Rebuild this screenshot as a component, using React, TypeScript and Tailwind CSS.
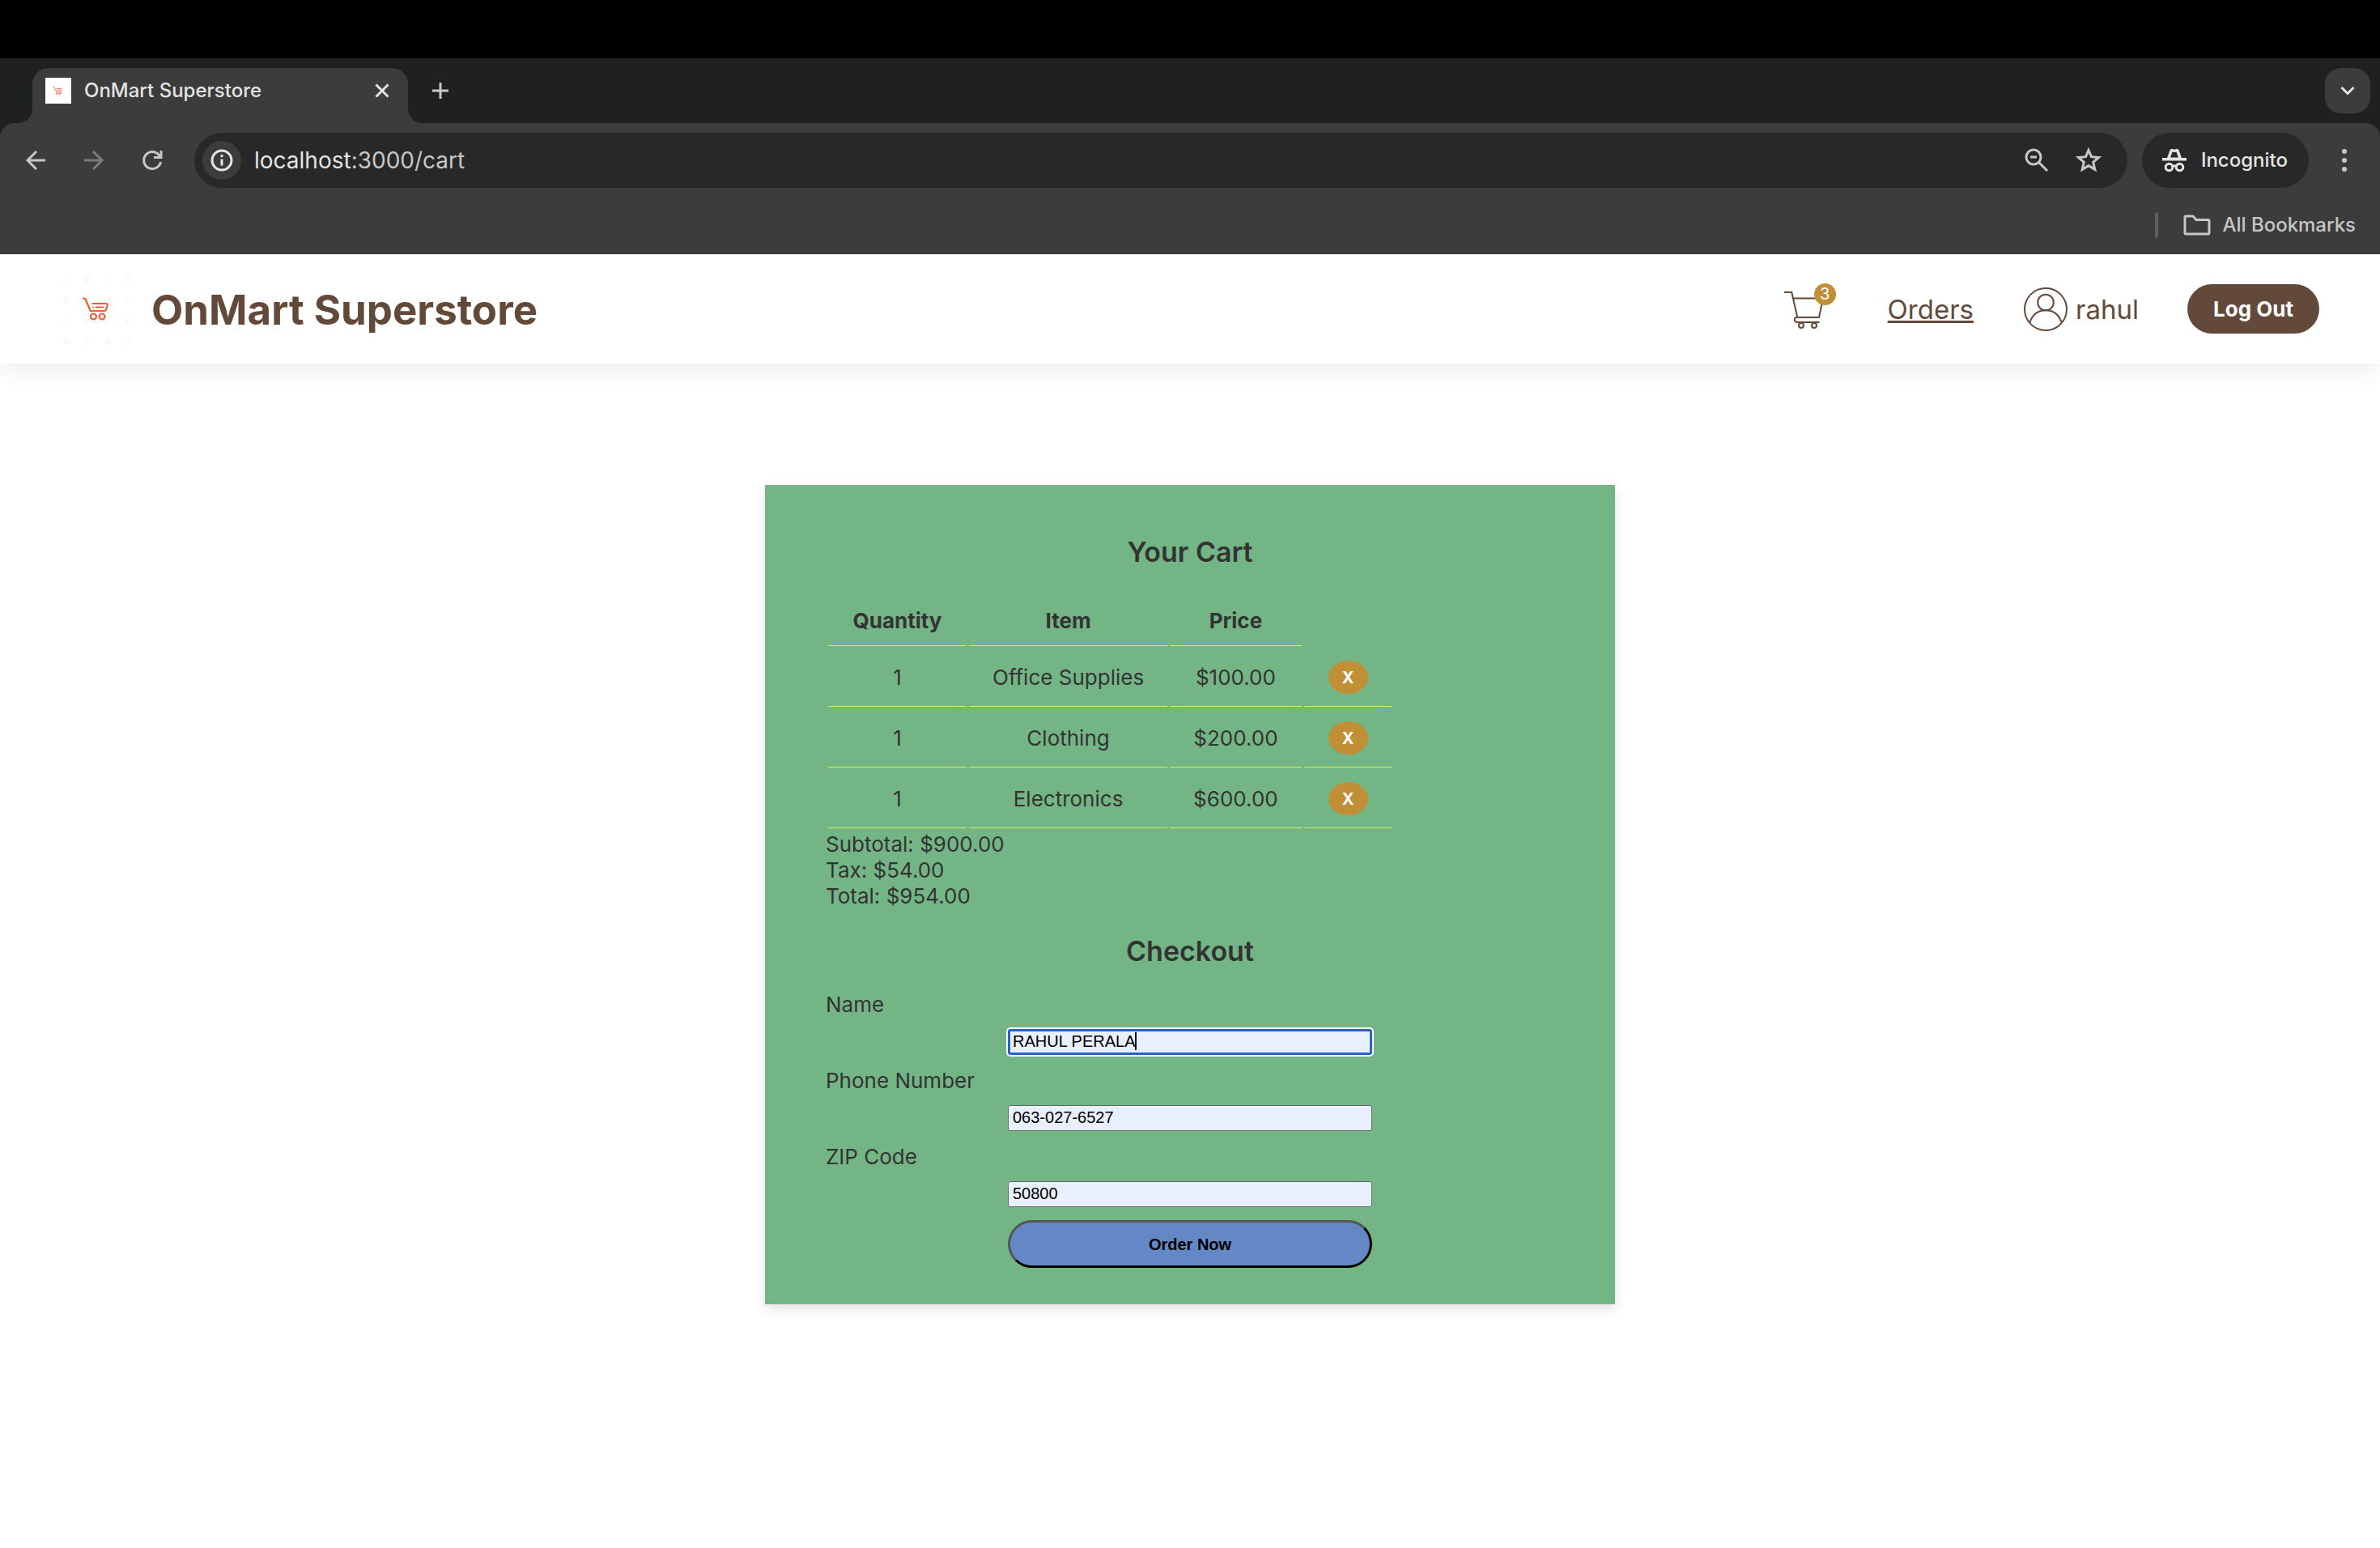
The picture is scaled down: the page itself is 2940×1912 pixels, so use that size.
import { useState } from "react";

const rows = [
  { qty: 1, item: "Office Supplies", price: "$100.00" },
  { qty: 1, item: "Clothing", price: "$200.00" },
  { qty: 1, item: "Electronics", price: "$600.00" },
];

function BrandMark({ className }: { className: string }) {
  const marks = [0, 1, 2, 3].flatMap((r) => [0, 1, 2, 3].map((c) => ({ r, c })));
  return (
    <svg viewBox="0 0 90 90" className={className} fill="none" aria-hidden="true">
      <rect width="90" height="90" fill="#fff" />
      <g stroke="#f1f1f1" strokeWidth="1">
        {marks.map(({ r, c }) =>
          (r + c) % 2 === 0 ? (
            <path key={`${r}${c}`} d={`M${3 + c * 25.5} ${12 + r * 25.5}l8-9`} />
          ) : (
            <circle key={`${r}${c}`} cx={7 + c * 25.5} cy={8 + r * 25.5} r="3" />
          ),
        )}
      </g>
      <g stroke="#e2623a" strokeWidth="2.2" strokeLinecap="round" strokeLinejoin="round">
        <path d="M28 31.500l2.500.8L36.700 47H54q1.500 0 2-1.500l1.700-5.500q.3-2-1.700-2H39.500" />
        <path d="M43.500 42.500h9M40 42.500h.1" />
        <circle cx="40.500" cy="54" r="3.500" />
        <circle cx="51" cy="54" r="3.500" />
      </g>
    </svg>
  );
}

function Toolbar() {
  return (
    <div className="rounded-t-[18px] bg-[#3c3c3c]">
      <div className="flex items-center pt-3 pr-[38px] pl-7 text-[#c7c7c7]">
        <button aria-label="Back" className="mr-10">
          <svg viewBox="0 0 32 32" className="size-8" fill="none" stroke="currentColor" strokeWidth="3">
            <path d="M28 16H6M17 5L6 16L17 27" />
          </svg>
        </button>
        <button aria-label="Forward" className="mr-10 text-[#7c7c7c]">
          <svg viewBox="0 0 32 32" className="size-8" fill="none" stroke="currentColor" strokeWidth="3">
            <path d="M4 16h22M15 5l11 11L15 27" />
          </svg>
        </button>
        <button aria-label="Reload" className="mr-9">
          <svg viewBox="0 0 32 32" className="size-8" fill="none" stroke="currentColor" strokeWidth="3">
            <path d="M26.500 18A10.500 10.500 0 1 1 24 9l2.500 3M27 4v8.500h-9" />
          </svg>
        </button>
        <div className="flex h-[68px] flex-1 items-center rounded-full bg-[#282828] pr-8 pl-[10px]">
          <button aria-label="Site information" className="mr-4 flex size-12 items-center justify-center rounded-full bg-[#3c3c3c] text-[#e3e3e3]">
            <svg viewBox="0 0 28 28" className="size-7" fill="none" stroke="currentColor" strokeWidth="3">
              <circle cx="14" cy="14" r="12" />
              <path d="M14 12.500v8M14 7v3" />
            </svg>
          </button>
          <div className="relative flex-1 text-[28px] leading-9">
            <input aria-label="Address" defaultValue="localhost:3000/cart" className="block w-full bg-transparent text-transparent outline-none" />
            <span aria-hidden="true" className="pointer-events-none absolute inset-0 text-[#c7c7c7]">
              <span className="text-[#e3e3e3]">localhost</span>:3000/cart
            </span>
          </div>
          <button aria-label="Zoom" className="mr-8">
            <svg viewBox="0 0 32 32" className="size-8" fill="none" stroke="currentColor" strokeWidth="3">
              <circle cx="12" cy="12" r="9" />
              <path d="M18.500 18.500L29 29M8 12h8" />
            </svg>
          </button>
          <button aria-label="Bookmark this page">
            <svg viewBox="0 0 32 32" className="size-8" fill="none" stroke="currentColor" strokeWidth="3">
              <path d="M16 3.500l3.500 8.200 9 .8-6.800 5.900 2.100 8.900L16 22.600l-7.800 4.700 2.100-8.900L3.500 12.500l9-.8z" />
            </svg>
          </button>
        </div>
        <button className="mr-[38px] ml-[18px] flex h-[68px] items-center gap-[18px] rounded-full bg-[#282828] pr-[26px] pl-[25px] text-[24px] font-medium text-[#e3e3e3]">
          <svg viewBox="0 0 30 30" className="size-[30px]" fill="currentColor">
            <path d="M0 12h30v3.500H0z" />
            <path d="M6 12L9.500 2.500Q10.500 0 13 1l2 .8L17 1q2.500-1 3.500 1.500L24 12z" />
            <path d="M10 11.500l2.600-7 2.400.8 2.400-.8 2.600 7z" fill="#282828" />
            <g fill="none" stroke="currentColor" strokeWidth="3">
              <circle cx="8.500" cy="23.500" r="4.300" />
              <circle cx="21.500" cy="23.500" r="4.300" />
              <path d="M12.500 22.500q2.500-1.500 5 0" />
            </g>
          </svg>
          Incognito
        </button>
        <button aria-label="Menu">
          <svg viewBox="0 0 12 32" className="h-8 w-3" fill="currentColor">
            <circle cx="6" cy="5" r="3" />
            <circle cx="6" cy="16" r="3" />
            <circle cx="6" cy="27" r="3" />
          </svg>
        </button>
      </div>
      <div className="flex h-[82px] items-center justify-end pt-[10px] pr-[30px]">
        <span className="mr-[31px] h-8 w-1 rounded-full bg-[#5f5f5f]" />
        <button className="flex items-center gap-[14px] text-[24px] font-medium text-[#c7c7c7]">
          <svg viewBox="0 0 34 26" className="h-[26px] w-[34px]" fill="none" stroke="currentColor" strokeWidth="3" strokeLinejoin="round">
            <path d="M2 3.500Q2 2 3.500 2H12l4 4.500h14.500Q32 6.500 32 8v14.500Q32 24 30.500 24h-27Q2 24 2 22.500z" />
          </svg>
          All Bookmarks
        </button>
      </div>
    </div>
  );
}

function Browser() {
  return (
    <div className="bg-[#1f2120]">
      <div className="h-[72px] bg-black" />
      <div className="flex items-end pt-3 pr-3 pl-5">
        <svg viewBox="0 0 20 20" className="size-5" aria-hidden="true">
          <path d="M20 0V20H0Q20 20 20 0z" fill="#3c3c3c" />
        </svg>
        <div className="flex h-[68px] w-[464px] items-center rounded-t-[20px] bg-[#3c3c3c] pr-5 pb-3 pl-4">
          <BrandMark className="size-8" />
          <span className="ml-4 flex-1 text-[24px] font-medium text-[#e3e3e3]">OnMart Superstore</span>
          <button aria-label="Close tab" className="text-[#e3e3e3]">
            <svg viewBox="0 0 24 24" className="size-6" fill="none" stroke="currentColor" strokeWidth="3">
              <path d="M4.500 4.500l15 15M19.500 4.500l-15 15" />
            </svg>
          </button>
        </div>
        <svg viewBox="0 0 20 20" className="size-5" aria-hidden="true">
          <path d="M0 0V20H20Q0 20 0 0z" fill="#3c3c3c" />
        </svg>
        <button aria-label="New tab" className="mb-7 ml-2 text-[#c7c7c7]">
          <svg viewBox="0 0 24 24" className="size-6" fill="none" stroke="currentColor" strokeWidth="3">
            <path d="M12 2v20M2 12h20" />
          </svg>
        </button>
        <button aria-label="Search tabs" className="mb-3 ml-auto flex size-14 items-center justify-center rounded-[20px] bg-[#3c3c3c] text-[#e3e3e3]">
          <svg viewBox="0 0 24 24" className="size-6" fill="none" stroke="currentColor" strokeWidth="3">
            <path d="M4.500 8l7.500 7.500L19.500 8" />
          </svg>
        </button>
      </div>
      <Toolbar />
    </div>
  );
}

function Header() {
  return (
    <header className="flex h-[135px] items-center bg-white px-[75px] text-[#63493a] shadow-[0_12px_24px_rgba(0,0,0,0.06)]">
      <BrandMark className="size-[90px]" />
      <h1 className="ml-[22px] pt-1 text-[51px] font-bold">OnMart Superstore</h1>
      <nav className="ml-auto flex items-center text-[33px]">
        <a href="#cart" aria-label="Cart, 3 items" className="relative mr-16 block h-[54px] w-16">
          <svg viewBox="0 0 64 54" className="h-[54px] w-16" fill="none" stroke="currentColor" strokeWidth="2">
            <path d="M0 6h9.300L16.300 37H43l5-23.500H11.500M16.300 37q-3.800 0-3.500 3 .3 3 3.500 3h27.200" />
            <circle cx="21" cy="47" r="3" />
            <circle cx="37" cy="47" r="3" />
          </svg>
          <span className="absolute top-[-5px] right-0 flex size-[27px] items-center justify-center rounded-full bg-[#c18f35] text-[20px] leading-none text-white">3</span>
        </a>
        <a href="#orders" className="mr-[62px] pt-[2px] underline">Orders</a>
        <a href="#account" className="mr-[60px] flex items-center gap-[10px]">
          <svg viewBox="0 0 54 54" className="size-[54px]" fill="none" stroke="currentColor" strokeWidth="2">
            <circle cx="27" cy="27" r="26" />
            <circle cx="27" cy="18.500" r="9.800" />
            <path d="M7.500 43q5-14.700 19.500-14.700T46.500 43" />
          </svg>
          <span className="pt-[2px]">rahul</span>
        </a>
        <button className="h-[61px] w-[163px] rounded-full bg-[#63493a] text-[26px] font-bold text-white">Log Out</button>
      </nav>
    </header>
  );
}

function Cart() {
  return (
    <table className="border-separate border-spacing-[3px] text-center text-[26px] leading-8">
      <thead>
        <tr>
          {["Quantity", "Item", "Price"].map((h) => (
            <th key={h} className="h-[62px] border-b border-[#d2ec6c] px-[29px] font-bold">{h}</th>
          ))}
        </tr>
      </thead>
      <tbody>
        {rows.map((r) => (
          <tr key={r.item}>
            <td className="h-[72px] w-[171px] border-b border-[#d2ec6c] px-[29px]">{r.qty}</td>
            <td className="border-b border-[#d2ec6c] px-[29px]">{r.item}</td>
            <td className="border-b border-[#d2ec6c] px-[29px]">{r.price}</td>
            <td className="border-b border-[#d2ec6c] px-[30px]">
              <button aria-label={`Remove ${r.item}`} className="block h-[41px] w-[49px] rounded-[50%] bg-[#c18f35] text-[20px] leading-none font-bold text-white">X</button>
            </td>
          </tr>
        ))}
      </tbody>
    </table>
  );
}

function Field({ id, label, initial }: { id: string; label: string; initial: string }) {
  const [value, setValue] = useState(initial);
  const active = id === "name";
  return (
    <div className="flex flex-col">
      <label htmlFor={id} className="text-[26px] leading-8">{label}</label>
      <div className="relative mx-auto mt-[14px] mb-4 w-[450px] font-['Liberation_Sans',sans-serif] text-[20px] text-black">
        <input
          id={id}
          value={value}
          onChange={(e) => setValue(e.target.value)}
          className={
            active
              ? "block h-8 w-full rounded-[3px] border-[3px] border-[#2b5fce] bg-[#e8effd] px-[3px] pb-[2px] leading-6 outline-[2px] outline-white"
              : "block h-8 w-full rounded-[3px] border border-[#666] bg-[#e8effd] px-[5px] pb-[2px] leading-6 outline-none"
          }
        />
        {active && <span aria-hidden="true" className="absolute top-1 left-[157px] h-[22px] w-[2px] bg-black" />}
      </div>
    </div>
  );
}

export default function App() {
  return (
    <div className="min-h-screen bg-white font-[Inter,sans-serif] text-[#333]">
      <Browser />
      <Header />
      <main className="mx-auto mt-[150px] w-[1050px] bg-[#74b585] px-[75px] pb-[45px] shadow-[0_5px_15px_rgba(0,0,0,0.12)]">
        <h2 className="pt-[61px] pb-[29px] text-center text-[34px] leading-[44px] font-semibold">Your Cart</h2>
        <Cart />
        <div className="pt-px text-[26px] leading-8">
          <p>Subtotal: $900.00</p>
          <p>Tax: $54.00</p>
          <p>Total: $954.00</p>
        </div>
        <h2 className="pt-[30px] pb-7 text-center text-[34px] leading-[44px] font-semibold">Checkout</h2>
        <form onSubmit={(e) => e.preventDefault()}>
          <Field id="name" label="Name" initial="RAHUL PERALA" />
          <Field id="phone" label="Phone Number" initial="063-027-6527" />
          <Field id="zip" label="ZIP Code" initial="50800" />
          <button className="mx-auto block h-[59px] w-[450px] rounded-full border-[3px] border-t-[#555] border-r-black border-b-black border-l-[#555] bg-[#6488c6] font-['Liberation_Sans',sans-serif] text-[20px] font-bold text-black">
            Order Now
          </button>
        </form>
      </main>
    </div>
  );
}
